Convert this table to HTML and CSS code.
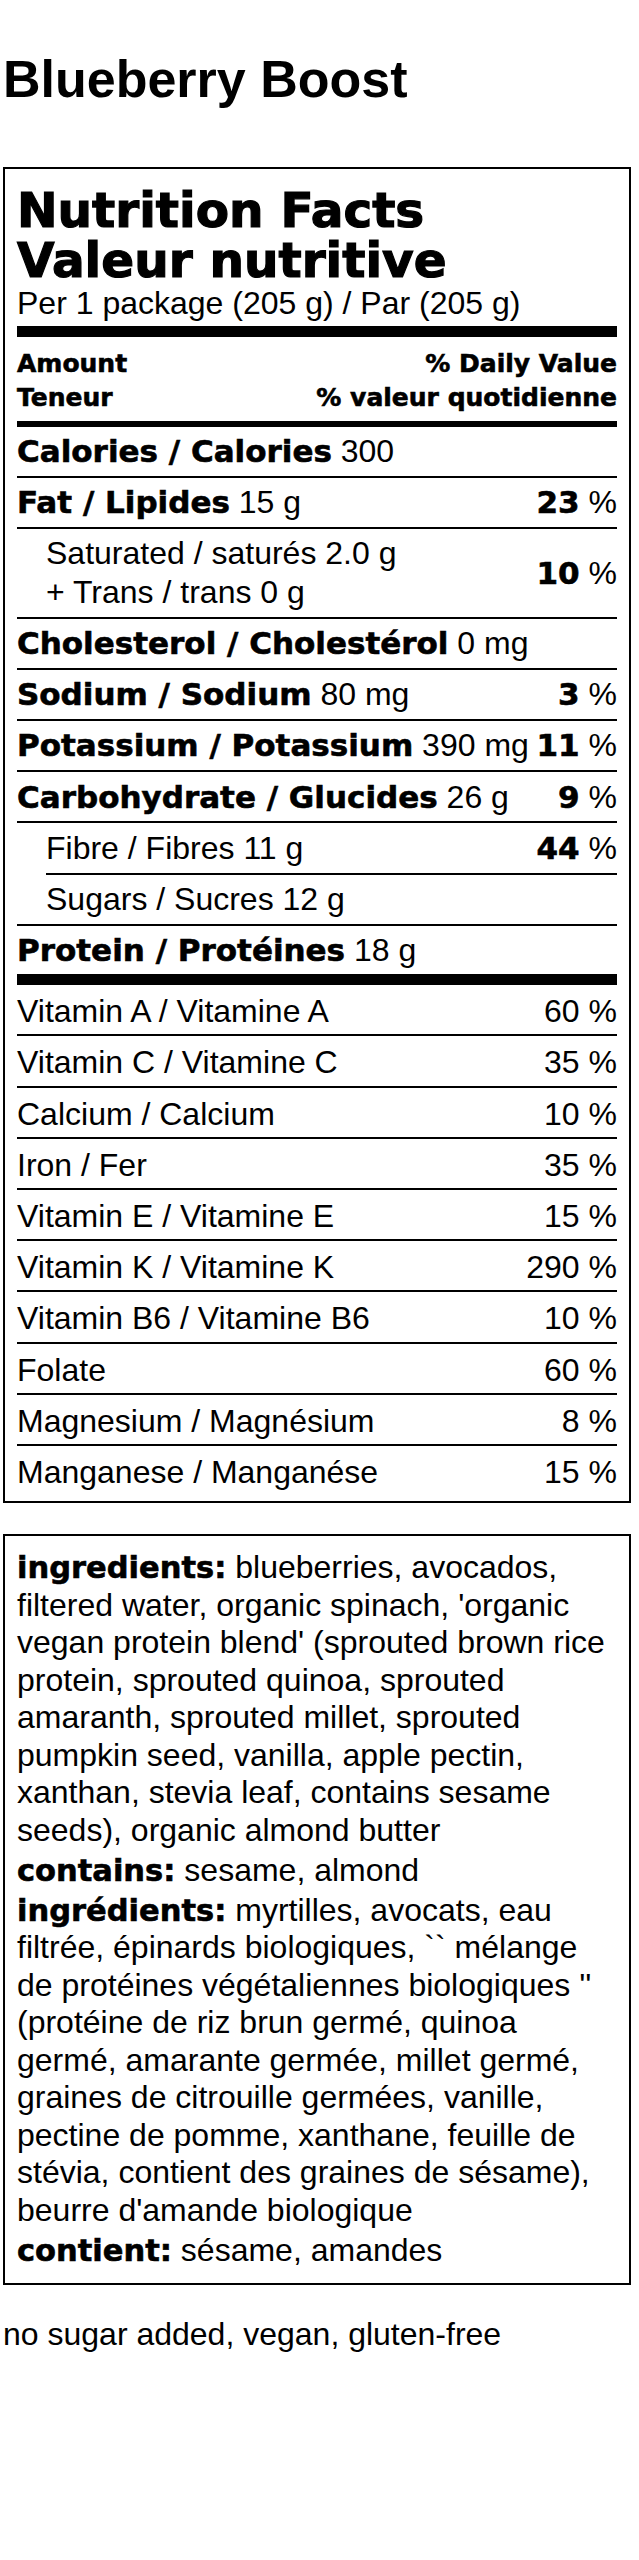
FILE: index.html
```html
<!DOCTYPE html>
<html lang="en">
<head>
<meta charset="utf-8">
<title>Blueberry Boost</title>
<link rel="stylesheet" href="styles.css">
</head>
<body>
<div class="page">
  <h1 class="title">Blueberry Boost</h1>

  <section class="nf">
    <div class="nf-head">Nutrition Facts<br>Valeur nutritive</div>
    <div class="serving">Per 1 package (205 g) / Par (205 g)</div>
    <div class="bar-thick"></div>
    <div class="dv-head">
      <div class="dv-line"><span>Amount</span><span>% Daily Value</span></div>
      <div class="dv-line"><span>Teneur</span><span>% valeur quotidienne</span></div>
    </div>
    <div class="bar-med"></div>

    <div class="row"><span class="lbl"><span class="b">Calories / Calories</span> 300</span></div>
    <div class="row"><span class="lbl"><span class="b">Fat / Lipides</span> 15 g</span><span class="pct"><span class="b">23</span> %</span></div>
    <div class="row sub"><span class="lbl">Saturated / saturés 2.0 g<br>+ Trans / trans 0 g</span><span class="pct"><span class="b">10</span> %</span></div>
    <div class="row"><span class="lbl"><span class="b">Cholesterol / Cholestérol</span> 0 mg</span></div>
    <div class="row"><span class="lbl"><span class="b">Sodium / Sodium</span> 80 mg</span><span class="pct"><span class="b">3</span> %</span></div>
    <div class="row"><span class="lbl"><span class="b">Potassium / Potassium</span> 390 mg</span><span class="pct"><span class="b">11</span> %</span></div>
    <div class="row"><span class="lbl"><span class="b">Carbohydrate / Glucides</span> 26 g</span><span class="pct"><span class="b">9</span> %</span></div>
    <div class="row indent"><span class="lbl">Fibre / Fibres 11 g</span><span class="pct"><span class="b">44</span> %</span></div>
    <div class="row sub"><span class="lbl">Sugars / Sucres 12 g</span></div>
    <div class="row protein"><span class="lbl"><span class="b">Protein / Protéines</span> 18 g</span></div>
    <div class="bar-thick"></div>

    <div class="row vit"><span>Vitamin A / Vitamine A</span><span>60 %</span></div>
    <div class="row vit"><span>Vitamin C / Vitamine C</span><span>35 %</span></div>
    <div class="row vit"><span>Calcium / Calcium</span><span>10 %</span></div>
    <div class="row vit"><span>Iron / Fer</span><span>35 %</span></div>
    <div class="row vit"><span>Vitamin E / Vitamine E</span><span>15 %</span></div>
    <div class="row vit"><span>Vitamin K / Vitamine K</span><span>290 %</span></div>
    <div class="row vit"><span>Vitamin B6 / Vitamine B6</span><span>10 %</span></div>
    <div class="row vit"><span>Folate</span><span>60 %</span></div>
    <div class="row vit"><span>Magnesium / Magnésium</span><span>8 %</span></div>
    <div class="row vit last"><span>Manganese / Manganése</span><span>15 %</span></div>
  </section>

  <section class="ing">
    <p><span class="b">ingredients:</span> blueberries, avocados, filtered water, organic spinach, 'organic vegan protein blend' (sprouted brown rice protein, sprouted quinoa, sprouted amaranth, sprouted millet, sprouted pumpkin seed, vanilla, apple pectin, xanthan, stevia leaf, contains sesame seeds), organic almond butter</p>
    <p><span class="b">contains:</span> sesame, almond</p>
    <p><span class="b">ingrédients:</span> myrtilles, avocats, eau filtrée, épinards biologiques, `` mélange de protéines végétaliennes biologiques '' (protéine de riz brun germé, quinoa germé, amarante germée, millet germé, graines de citrouille germées, vanille, pectine de pomme, xanthane, feuille de stévia, contient des graines de sésame), beurre d'amande biologique</p>
    <p><span class="b">contient:</span> sésame, amandes</p>
  </section>

  <p class="claims">no sugar added, vegan, gluten-free</p>
</div>
</body>
</html>
```

FILE: styles.css
```css
html, body {
  margin: 0;
  padding: 0;
  background: #fff;
  color: #000;
  font-family: "Liberation Sans", Arial, Helvetica, sans-serif;
}

.page {
  padding: 49px 8px 0 3px;
}

.title {
  margin: 0 0 58px;
  font-family: "Liberation Sans", Arial, sans-serif;
  font-weight: bold;
  font-size: 52px;
  line-height: 60px;
}

/* ---------- Nutrition facts table ---------- */
.nf {
  border: 2px solid #000;
  padding: 16px 12px 6.3px 12px;
  font-size: 32px;
}

.nf-head {
  font-family: "DejaVu Sans", sans-serif;
  font-weight: bold;
  font-size: 48.5px;
  line-height: 50px;
  -webkit-text-stroke: 1.2px #000;
}

.serving {
  font-size: 32px;
  line-height: 36px;
  margin-bottom: 5px;
}

.bar-thick {
  height: 11px;
  background: #000;
}

.bar-med {
  height: 6px;
  background: #000;
}

.dv-head {
  padding: 9.5px 0 5.4px;
  font-family: "DejaVu Sans", sans-serif;
  font-weight: bold;
  font-size: 25px;
  line-height: 34.4px;
  -webkit-text-stroke: 0.6px #000;
}

.dv-line {
  display: flex;
  justify-content: space-between;
}

.row {
  display: flex;
  justify-content: space-between;
  align-items: center;
  white-space: nowrap;
  font-size: 32px;
  line-height: 38.4px;
  padding: 5.4px 0;
  border-bottom: 2px solid #000;
}

.row.sub {
  padding-left: 29px;
}

.row.indent {
  margin-left: 29px;
}

.row.protein {
  border-bottom: 0;
  padding-bottom: 4.5px;
}

.row.vit {
  padding: 7px 0 3.8px;
}

.row.last {
  border-bottom: 0;
}

.b {
  font-family: "DejaVu Sans", sans-serif;
  font-weight: bold;
  font-size: 31px;
  line-height: 1;
  -webkit-text-stroke: 0.6px #000;
}

/* ---------- Ingredients ---------- */
.ing {
  margin-top: 31px;
  border: 2px solid #000;
  padding: 13px 14px 13.2px 12px;
  font-size: 32px;
  line-height: 37.5px;
}

.ing p {
  margin: 0 0 2.5px;
}

.ing p:last-child {
  margin-bottom: 0;
}

.ing .b {
  font-size: 30.5px;
}

.claims {
  margin: 31px 0 0;
  font-size: 32px;
  line-height: 37.5px;
}
```
